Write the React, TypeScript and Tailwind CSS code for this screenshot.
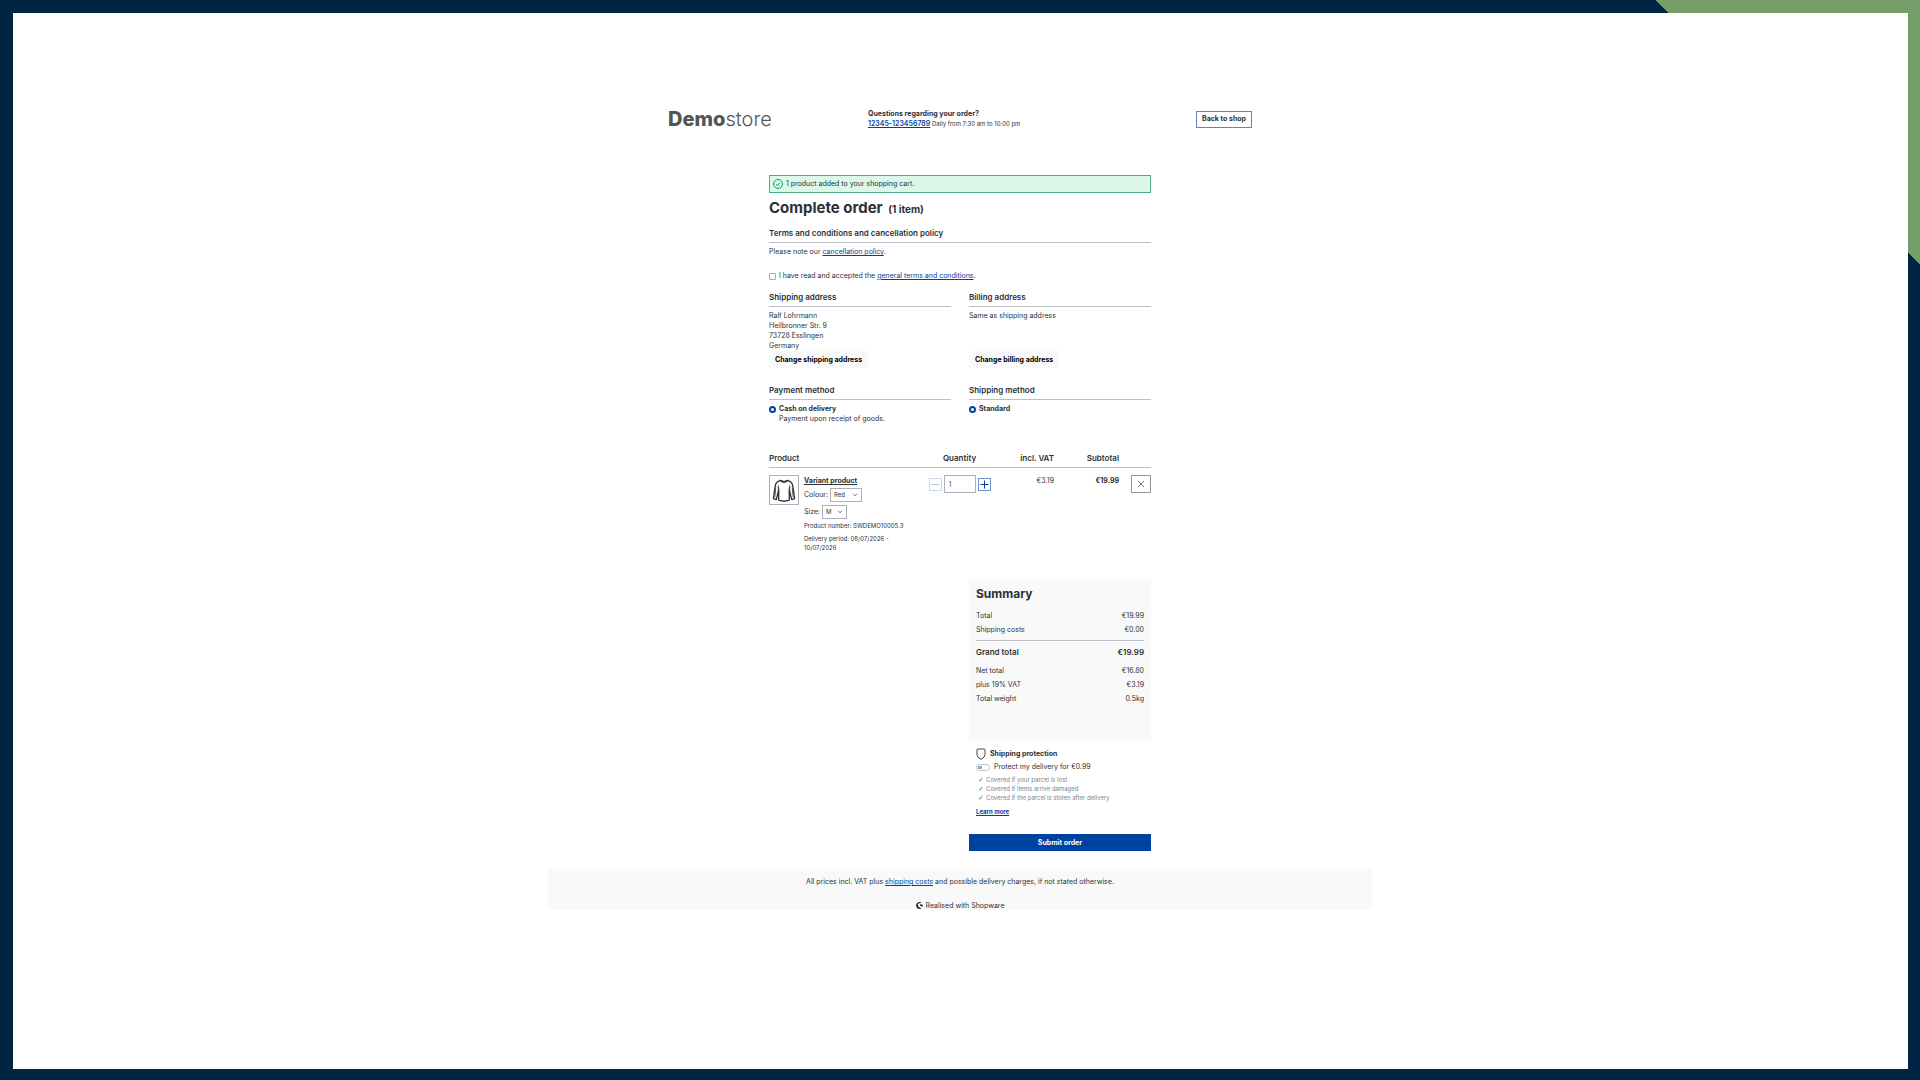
import type { ReactNode } from "react";
import { SiShopware } from "react-icons/si";

export default function App() {
  return (
    <div className="flex min-h-screen flex-col bg-[linear-gradient(225deg,#769e68_187px,#002444_187px)] pt-[13px] pr-[12px] pb-[11px] pl-[13px] font-[Inter,sans-serif] text-[7px] leading-[10px] text-[#2b3136]">
      <div className="flex grow flex-col items-center bg-white pr-px">
        <Header />
        <main className="mt-[46px] flex w-full max-w-[382px] flex-col">
          <div
            role="alert"
            className="flex h-[18px] items-center gap-[3px] border border-[#4fae87] bg-[#dcf8eb] px-[3px]"
          >
            <SuccessIcon />
            1 product added to your shopping cart.
          </div>
          <h1 className="mt-[5px] text-[15px] leading-[20px] font-bold">
            Complete order <small className="ml-[2px] text-[10px] font-bold">(1 item)</small>
          </h1>
          <Terms />
          <Addresses />
          <Methods />
          <Cart />
          <aside className="mt-[28px] flex w-full max-w-[182px] flex-col self-end">
            <Summary />
            <Protection />
            <button
              type="button"
              className="mt-[17px] h-[17px] bg-[#0042a0] font-bold text-white"
            >
              Submit order
            </button>
          </aside>
        </main>
        <Footer />
      </div>
    </div>
  );
}

const Header = () => (
  <header className="mt-[96px] flex w-full max-w-[584px] items-center">
    <a href="#" className="w-[200px] text-[20px] leading-[17px] text-[#555]">
      <span className="font-extrabold">Demo</span>
      <span className="font-light">store</span>
    </a>
    <div className="grow">
      <p className="font-bold">Questions regarding your order?</p>
      <p className="text-[6px]">
        <a href="#" className="text-[7px] font-semibold text-[#0042a0] underline">
          12345-123456789
        </a>{" "}
        Daily from 7:30 am to 10:00 pm
      </p>
    </div>
    <a
      href="#"
      className="flex h-[17px] items-center border border-[#5d86c4] px-[5px] font-bold"
    >
      Back to shop
    </a>
  </header>
);

const Title = ({ children }: { children: ReactNode }) => (
  <h2 className="border-b border-[#bcc1c7] pb-[3px] text-[8px] leading-[12px] font-semibold">
    {children}
  </h2>
);

const Link = ({ children }: { children: ReactNode }) => (
  <a href="#" className="text-[#0042a0] underline">
    {children}
  </a>
);

const Terms = () => (
  <section className="mt-[8px]">
    <Title>Terms and conditions and cancellation policy</Title>
    <p className="mt-[4px]">
      Please note our <Link>cancellation policy</Link>.
    </p>
    <div className="mt-[14px] flex items-center gap-[3px]">
      <input
        id="tos"
        type="checkbox"
        className="size-[7px] appearance-none rounded-[1px] border border-[#a1a8b0]"
      />
      <label htmlFor="tos">
        I have read and accepted the <Link>general terms and conditions</Link>.
      </label>
    </div>
  </section>
);

const Addresses = () => (
  <div className="mt-[10px] grid grid-cols-2 gap-[18px]">
    <section className="flex flex-col items-start">
      <div className="w-full">
        <Title>Shipping address</Title>
      </div>
      <address className="mt-[4px] not-italic">
        Ralf Lohrmann
        <br />
        Heilbronner Str. 9
        <br />
        73728 Esslingen
        <br />
        Germany
      </address>
      <button type="button" className="h-[17px] bg-[#f9f9f9] px-[6px] font-bold text-black">
        Change shipping address
      </button>
    </section>
    <section className="flex flex-col items-start">
      <div className="w-full">
        <Title>Billing address</Title>
      </div>
      <p className="mt-[4px]">Same as shipping address</p>
      <button type="button" className="mt-auto h-[17px] bg-[#f9f9f9] px-[6px] font-bold text-black">
        Change billing address
      </button>
    </section>
  </div>
);

const Methods = () => (
  <div className="mt-[16px] grid grid-cols-2 gap-[18px]">
    <section>
      <Title>Payment method</Title>
      <Radio id="cash" name="payment" label="Cash on delivery" />
      <p className="pl-[10px]">Payment upon receipt of goods.</p>
    </section>
    <section>
      <Title>Shipping method</Title>
      <Radio id="standard" name="shipping" label="Standard" />
    </section>
  </div>
);

const Radio = ({ id, name, label }: { id: string; name: string; label: string }) => (
  <div className="mt-[4px] flex items-center gap-[3px]">
    <input
      id={id}
      name={name}
      type="radio"
      defaultChecked
      className="size-[7px] appearance-none rounded-full border-2 border-[#0042a0] bg-white"
    />
    <label htmlFor={id} className="font-bold">
      {label}
    </label>
  </div>
);

const Variant = ({ id, label, options }: { id: string; label: string; options: string[] }) => (
  <div className="flex items-center gap-[2px]">
    <label htmlFor={id}>{label}:</label>
    <div className="relative">
      <select
        id={id}
        className="block h-[14px] appearance-none border border-[#a9b2bc] bg-white pr-[14px] pl-[3px] text-[6px]"
      >
        {options.map((option) => (
          <option key={option}>{option}</option>
        ))}
      </select>
      <svg
        viewBox="0 0 6 4"
        className="pointer-events-none absolute top-[5px] right-[4px] h-[4px] w-[6px]"
        fill="none"
        stroke="#4a545b"
      >
        <path d="M1 .8 3 2.8 5 .8" strokeWidth=".8" />
      </svg>
    </div>
  </div>
);

const Cart = () => (
  <table className="mt-[28px] w-full table-fixed">
    <thead>
      <tr className="border-b border-[#bcc1c7] text-right text-[8px] leading-[12px] [&>th]:pb-[3px] [&>th]:font-semibold">
        <th className="text-left">Product</th>
        <th className="w-[67px] text-center">Quantity</th>
        <th className="w-[61px]">incl. VAT</th>
        <th className="w-[65px]">Subtotal</th>
        <th className="w-[32px]"></th>
      </tr>
    </thead>
    <tbody>
      <tr className="text-right align-top [&>td]:pt-[7px]">
        <td className="text-left">
          <div className="flex items-start gap-[5px]">
            <div className="size-[30px] shrink-0 border border-[#a9b2bc] p-[2px]">
              <Sweater />
            </div>
            <div className="max-w-[104px] pt-px">
              <a href="#" className="mb-[2px] block font-bold underline">
                Variant product
              </a>
              <Variant id="colour" label="Colour" options={["Red", "Blue"]} />
              <div className="h-[3px]" />
              <Variant id="size" label="Size" options={["M", "L"]} />
              <p className="mt-[2px] text-[6px] leading-[9px] whitespace-nowrap">
                Product number: SWDEMO10005.3
              </p>
              <p className="mt-[4px] text-[6px] leading-[9px]">
                Delivery period: 08/07/2026 - 10/07/2026
              </p>
            </div>
          </div>
        </td>
        <td>
          <div className="flex items-center justify-center gap-[2px]">
            <button
              type="button"
              aria-label="Decrease quantity"
              disabled
              className="flex size-[13px] items-center justify-center border border-[#ccd9ec]"
            >
              <svg viewBox="0 0 9 9" className="size-[9px]" stroke="#b3c6e3">
                <path d="M.5 4.500h8" />
              </svg>
            </button>
            <input
              aria-label="Quantity"
              defaultValue="1"
              className="h-[18px] w-[32px] border border-[#a9b2bc] px-[4px] text-[7px] text-[#4a545b]"
            />
            <button
              type="button"
              aria-label="Increase quantity"
              className="flex size-[13px] items-center justify-center border border-[#6d93cb]"
            >
              <svg viewBox="0 0 9 9" className="size-[9px]" stroke="#0042a0">
                <path d="M.5 4.500h8M4.500 .5v8" />
              </svg>
            </button>
          </div>
        </td>
        <td>
          <p className="pt-px">€3.19</p>
        </td>
        <td>
          <p className="pt-px font-bold">€19.99</p>
        </td>
        <td>
          <button
            type="button"
            aria-label="Remove product"
            className="inline-flex h-[18px] w-[20px] items-center justify-center border border-[#8d959d]"
          >
            <svg viewBox="0 0 8 8" className="size-[8px]" stroke="#4a545b" strokeWidth=".8">
              <path d="m1 1 6 6M7 1 1 7" />
            </svg>
          </button>
        </td>
      </tr>
    </tbody>
  </table>
);

const Row = ({ label, value }: { label: string; value: string }) => (
  <div className="flex justify-between">
    <dt>{label}</dt>
    <dd>{value}</dd>
  </div>
);

const Summary = () => (
  <section className="bg-[#f9f9f9] px-[7px] pt-[6px] pb-[34px]">
    <h2 className="text-[12px] leading-[16px] font-bold">Summary</h2>
    <dl className="mt-[7px] leading-[14px]">
      <Row label="Total" value="€19.99" />
      <Row label="Shipping costs" value="€0.00" />
      <div className="mt-[3px] mb-[5px] border-t border-[#bcc1c7] pt-[4px] text-[8px] font-semibold">
        <Row label="Grand total" value="€19.99" />
      </div>
      <Row label="Net total" value="€16.80" />
      <Row label="plus 19% VAT" value="€3.19" />
      <Row label="Total weight" value="0.5kg" />
    </dl>
  </section>
);

const Protection = () => (
  <section className="mt-[8px] px-[7px]">
    <h3 className="flex items-center gap-[4px] font-bold">
      <svg viewBox="0 0 10 12" className="h-[12px] w-[10px]" fill="none" stroke="#3c444b">
        <path d="M1.8 1h6.4q.8 0 .8.8v5Q9 9.500 5 11.300 1 9.500 1 6.800v-5Q1 1 1.800 1Z" />
      </svg>
      Shipping protection
    </h3>
    <div className="mt-[2px] flex items-center gap-[4px]">
      <input
        id="protect"
        type="checkbox"
        role="switch"
        className="h-[7px] w-[14px] appearance-none rounded-full border border-[#bcc1c7] bg-[radial-gradient(circle_at_3px_50%,#a1a8b0_2px,#fff_2px)]"
      />
      <label htmlFor="protect">Protect my delivery for €0.99</label>
    </div>
    <ul className="mt-[3px] text-[6px] leading-[9px] text-[#798490]">
      {benefits.map((benefit) => (
        <li key={benefit} className="flex items-center gap-[3px] pl-[2px]">
          <svg viewBox="0 0 5 5" className="size-[5px]" fill="none" stroke="#26a06b">
            <path d="M.8 3 2 4.200 4 .8" strokeWidth=".9" />
          </svg>
          {benefit}
        </li>
      ))}
    </ul>
    <a href="#" className="mt-[5px] block text-[6px] font-bold text-[#0042a0] underline">
      Learn more
    </a>
  </section>
);

const Footer = () => (
  <footer className="mt-[18px] flex w-full max-w-[824px] flex-col items-center bg-[#f9f9f9] pt-[8px]">
    <p>
      All prices incl. VAT plus <Link>shipping costs</Link> and possible delivery charges, if not
      stated otherwise.
    </p>
    <p className="mt-[14px] flex items-center gap-[3px] leading-[9px]">
      <SiShopware className="size-[7px]" />
      Realised with Shopware
    </p>
  </footer>
);

const SuccessIcon = () => (
  <svg viewBox="0 0 10 10" className="size-[10px]" fill="none" stroke="#159a60">
    <circle cx="5" cy="5" r="4.500" />
    <path d="M3 5.200 4.400 6.500 7 3.700" />
  </svg>
);

const Sweater = () => (
  <svg viewBox="0 0 25 25" className="size-full" fill="none" stroke="#333" strokeLinejoin="round">
    <path d="M9 2.500Q12.500 5 16 2.500L19.500 4Q21.200 5 21.800 9L23.500 21.500 20.500 22.500 18 12V23Q12.500 25 7 23V12L4.500 22.500 1.500 21.500 3.200 9Q3.800 5 5.500 4Z" strokeWidth="1.400" />
    <path d="M9 2.500Q12.500 6 16 2.500" strokeWidth="1.500" />
    <path d="M7 12 6.300 8M18 12 18.700 8" strokeWidth="1.200" />
    <path d="M4 10 3 20M21 10 22 20" strokeWidth=".8" />
  </svg>
);

const benefits = [
  "Covered if your parcel is lost",
  "Covered if items arrive damaged",
  "Covered if the parcel is stolen after delivery",
];
